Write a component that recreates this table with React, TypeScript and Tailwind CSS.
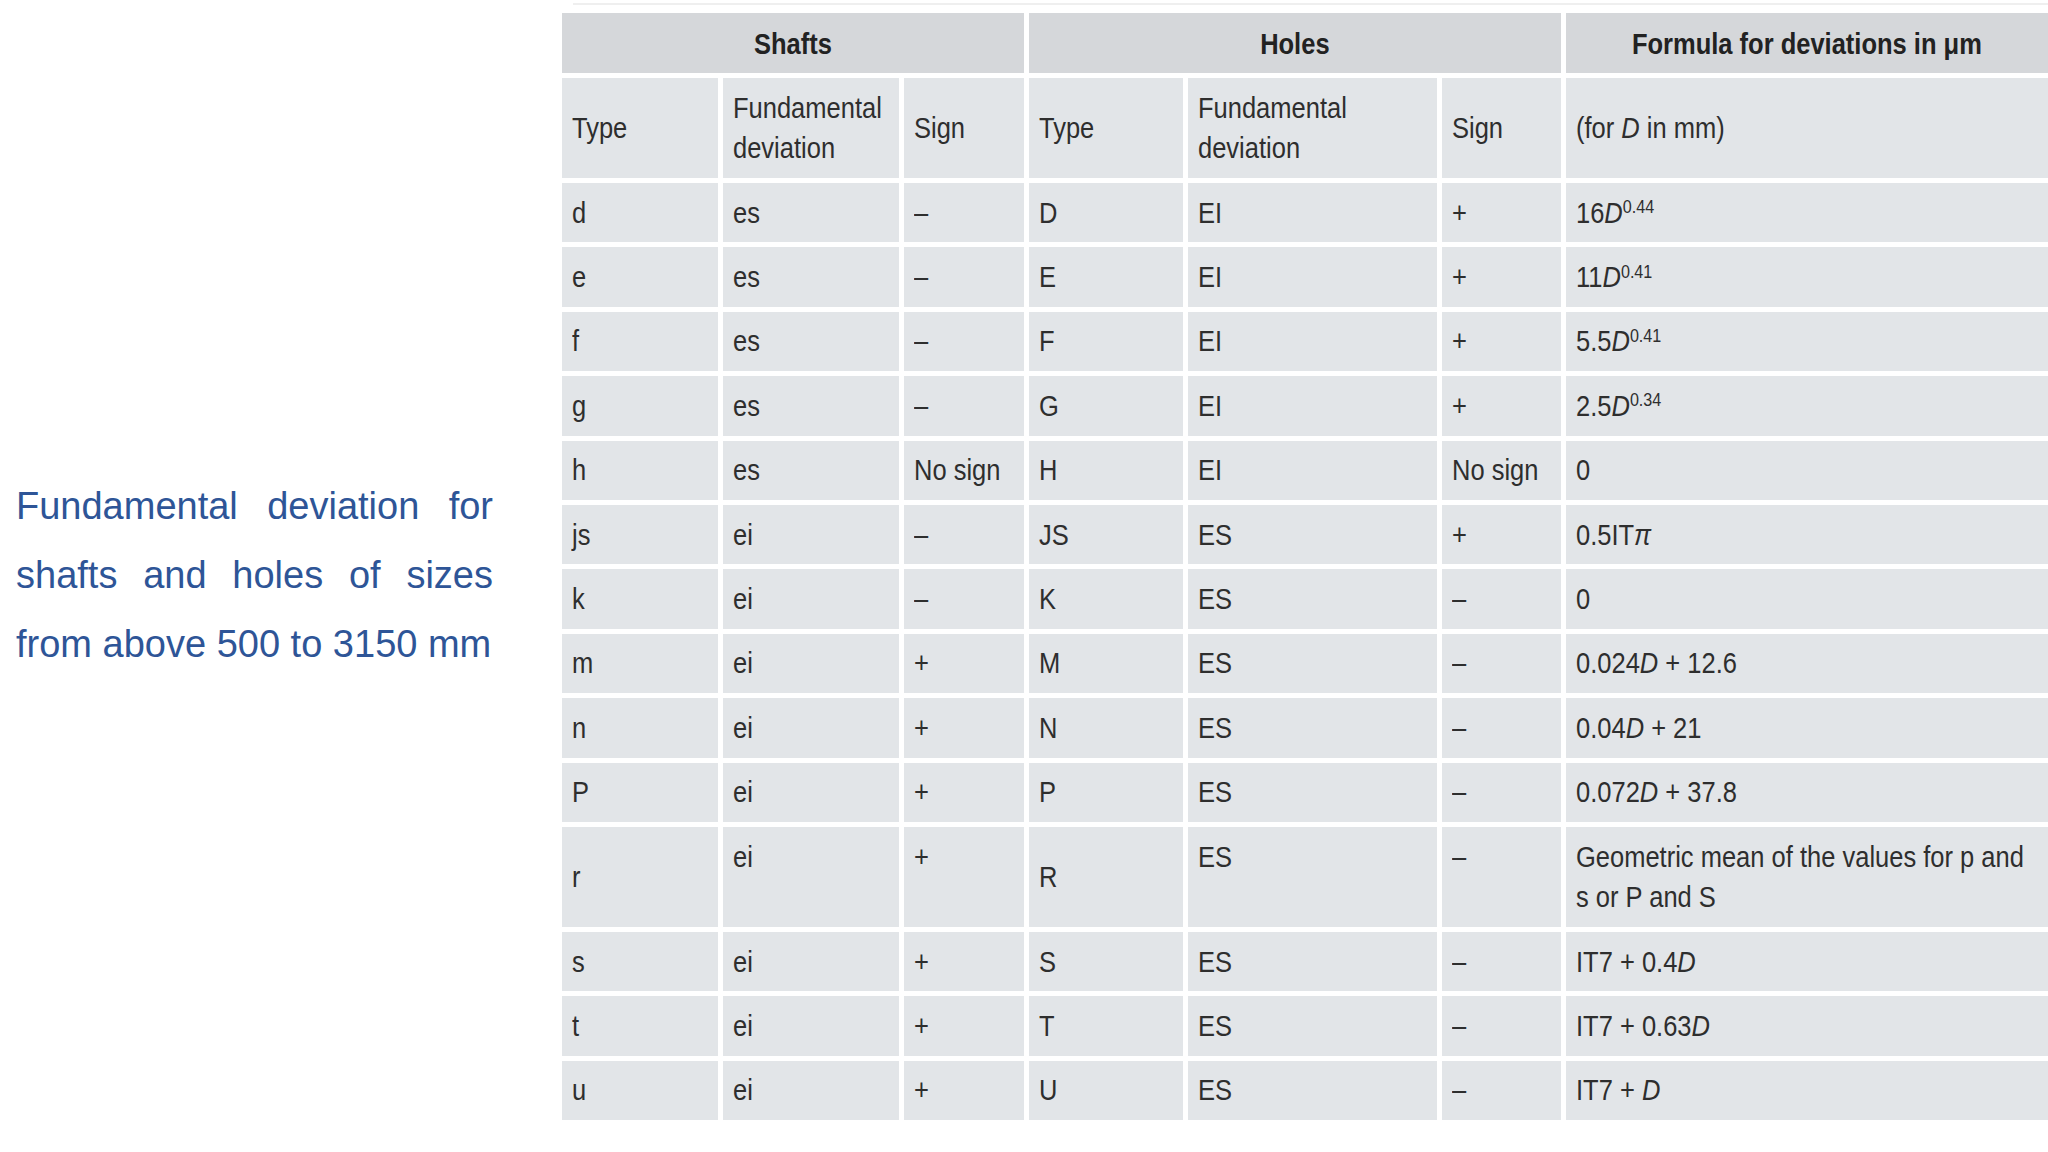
import React from "react";

const D = () => <i>D</i>;
const Sup = ({ children }: { children: React.ReactNode }) => (
  <sup className="text-[19px]">{children}</sup>
);

const rows: { cells: React.ReactNode[]; tall?: boolean }[] = [
  { cells: ["d", "es", "–", "D", "EI", "+", <>16<D /><Sup>0.44</Sup></>] },
  { cells: ["e", "es", "–", "E", "EI", "+", <>11<D /><Sup>0.41</Sup></>] },
  { cells: ["f", "es", "–", "F", "EI", "+", <>5.5<D /><Sup>0.41</Sup></>] },
  { cells: ["g", "es", "–", "G", "EI", "+", <>2.5<D /><Sup>0.34</Sup></>] },
  { cells: ["h", "es", "No sign", "H", "EI", "No sign", "0"] },
  { cells: ["js", "ei", "–", "JS", "ES", "+", <>0.5IT<i>π</i></>] },
  { cells: ["k", "ei", "–", "K", "ES", "–", "0"] },
  { cells: ["m", "ei", "+", "M", "ES", "–", <>0.024<D /> + 12.6</>] },
  { cells: ["n", "ei", "+", "N", "ES", "–", <>0.04<D /> + 21</>] },
  { cells: ["P", "ei", "+", "P", "ES", "–", <>0.072<D /> + 37.8</>] },
  {
    tall: true,
    cells: [
      "r",
      "ei",
      "+",
      "R",
      "ES",
      "–",
      <>Geometric mean of the values for p and<br />s or P and S</>,
    ],
  },
  { cells: ["s", "ei", "+", "S", "ES", "–", <>IT7 + 0.4<D /></>] },
  { cells: ["t", "ei", "+", "T", "ES", "–", <>IT7 + 0.63<D /></>] },
  { cells: ["u", "ei", "+", "U", "ES", "–", <>IT7 + <D /></>] },
];

function Td({ children, mid, tall }: { children: React.ReactNode; mid?: boolean; tall?: boolean }) {
  return (
    <div
      className={`bg-[#e2e5e8] pl-[10px] leading-[40px] flex overflow-visible ${tall ? (mid ? "items-center" : "items-start pt-[10px]") : "items-center"}`}
    >
      <span className="inline-block whitespace-nowrap origin-left scale-x-[0.85]">{children}</span>
    </div>
  );
}

function Th({ children, span }: { children: React.ReactNode; span?: boolean }) {
  return (
    <div
      className={`${span ? "col-span-3" : ""} bg-[#d5d7da] flex items-center justify-center font-bold text-[#222222]`}
    >
      <span className="inline-block whitespace-nowrap origin-center scale-x-[0.85]">{children}</span>
    </div>
  );
}

export default function App() {
  return (
    <div className="w-[2048px] h-[1152px] bg-white flex overflow-hidden">
      <div className="w-[562px] shrink-0 pl-[16px] pt-[472px]">
        <p
          className="w-[477px] text-justify text-[38px] leading-[69px] text-[#2e5597]"
          style={{ fontFamily: '"Liberation Sans", Arial, sans-serif' }}
        >
          Fundamental deviation for shafts and holes of sizes from above 500 to 3150 mm
        </p>
      </div>
      <div className="flex-1 pt-[3px]">
        <div className="h-[2px] bg-[#efefef] ml-[11px]" />
        <div
          className="mt-[8px] grid gap-[5px] grid-cols-[156px_176px_120px_154px_249px_119px_482px] grid-rows-[60px_100px_repeat(10,59.4px)_100px_repeat(3,59.4px)] text-[30px] text-[#2e2e2e]"
          style={{ fontFamily: '"Liberation Sans Narrow", "Arial Narrow", "Liberation Sans", sans-serif' }}
        >
          <Th span>Shafts</Th>
          <Th span>Holes</Th>
          <Th>Formula for deviations in μm</Th>

          <Td>Type</Td>
          <Td>Fundamental<br />deviation</Td>
          <Td>Sign</Td>
          <Td>Type</Td>
          <Td>Fundamental<br />deviation</Td>
          <Td>Sign</Td>
          <Td>(for <D /> in mm)</Td>

          {rows.map((r, i) =>
            r.cells.map((c, j) => (
              <Td key={`${i}-${j}`} tall={r.tall} mid={j === 0 || j === 3}>
                {c}
              </Td>
            ))
          )}
        </div>
      </div>
    </div>
  );
}
